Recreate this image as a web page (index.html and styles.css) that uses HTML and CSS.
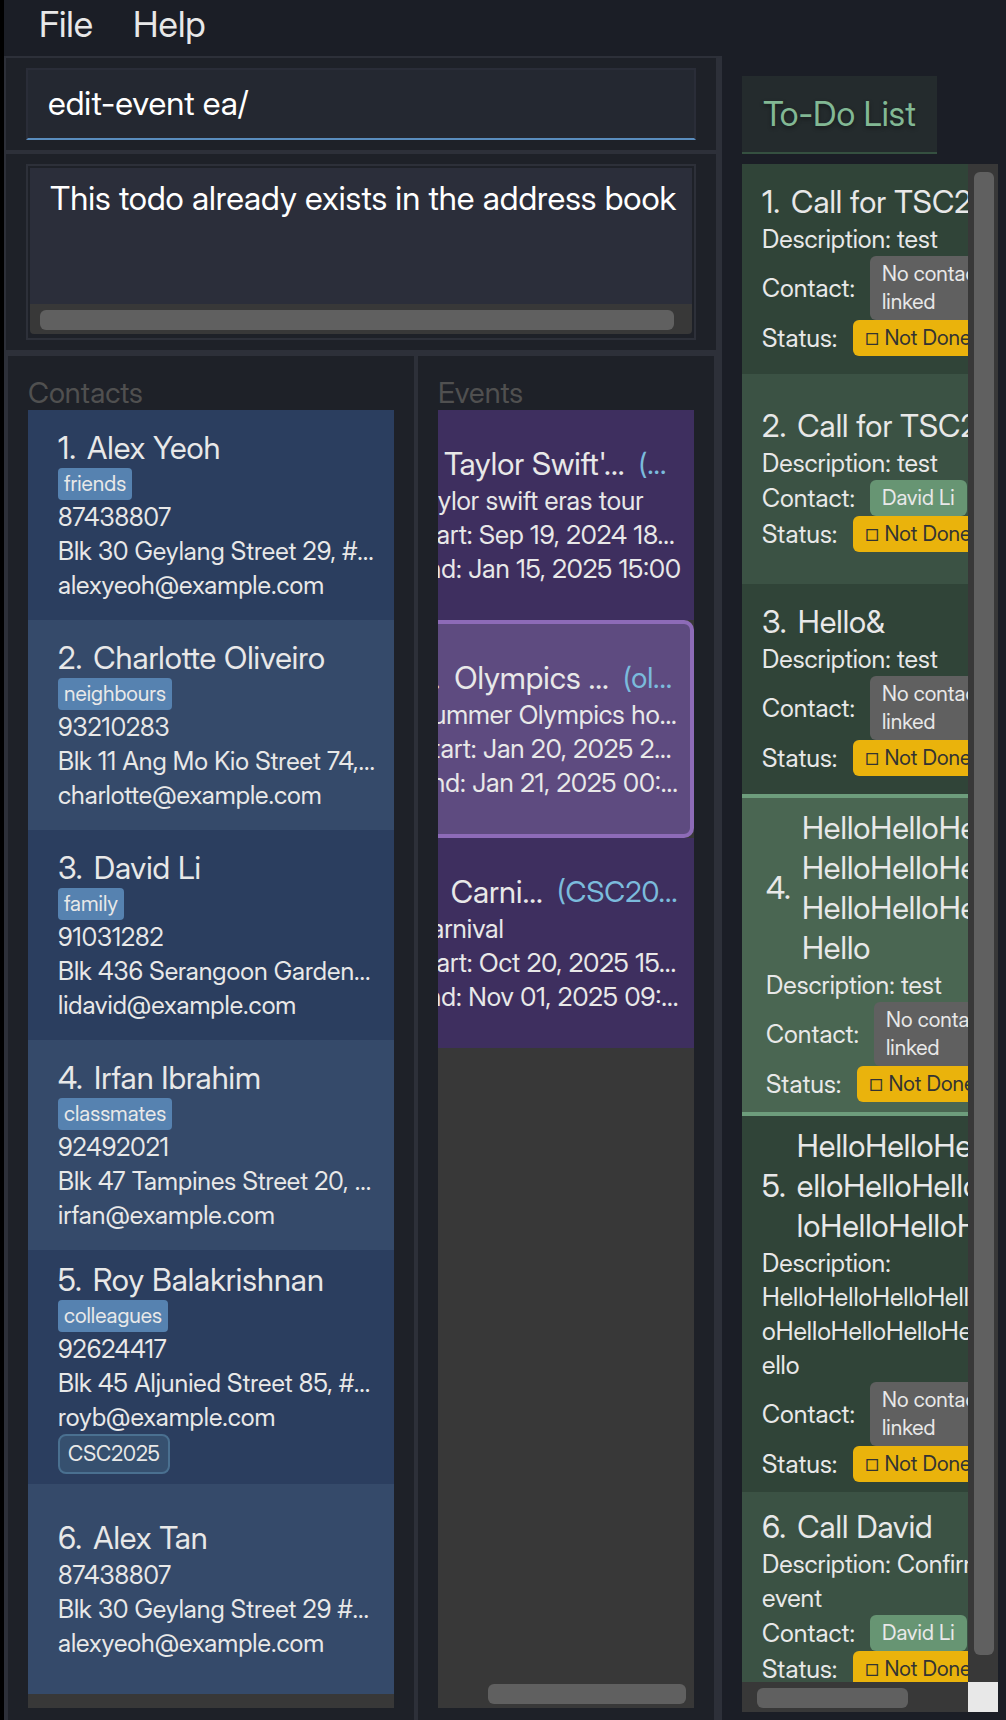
FILE: index.html
```html
<!DOCTYPE html>
<html lang="en">
<head>
<meta charset="utf-8">
<meta name="viewport" content="width=device-width, initial-scale=1">
<title>Address Book</title>
<link rel="stylesheet" href="styles.css">
</head>
<body>
<div class="app">
  <nav class="menu-bar" aria-label="Main menu">
    <button type="button" class="menu">File</button>
    <button type="button" class="menu">Help</button>
  </nav>
  <div class="workspace">
    <main class="main-pane">
      <form class="command">
        <input class="command-input" type="text" aria-label="Command" value="edit-event ea/">
      </form>
      <section class="result">
        <div class="result-frame">
          <textarea class="result-text" readonly wrap="off" aria-label="Result">This todo already exists in the address book</textarea>
          <div class="scroll-x scroll-result"><div class="thumb"></div></div>
        </div>
      </section>
      <div class="lists">
        <section class="column contacts">
          <h2 class="column-title">Contacts</h2>
          <div class="list-view">
            <ol class="list">
              <li class="card"><h3 class="name"><span>1.</span><span>Alex Yeoh</span></h3><span class="tag">friends</span><p>87438807</p><p>Blk 30 Geylang Street 29, #...</p><p>alexyeoh@example.com</p></li>
              <li class="card"><h3 class="name"><span>2.</span><span>Charlotte Oliveiro</span></h3><span class="tag">neighbours</span><p>93210283</p><p>Blk 11 Ang Mo Kio Street 74,...</p><p>charlotte@example.com</p></li>
              <li class="card"><h3 class="name"><span>3.</span><span>David Li</span></h3><span class="tag">family</span><p>91031282</p><p>Blk 436 Serangoon Garden...</p><p>lidavid@example.com</p></li>
              <li class="card"><h3 class="name"><span>4.</span><span>Irfan Ibrahim</span></h3><span class="tag">classmates</span><p>92492021</p><p>Blk 47 Tampines Street 20, ...</p><p>irfan@example.com</p></li>
              <li class="card"><h3 class="name"><span>5.</span><span>Roy Balakrishnan</span></h3><span class="tag">colleagues</span><p>92624417</p><p>Blk 45 Aljunied Street 85, #...</p><p>royb@example.com</p><span class="event-tag">CSC2025</span></li>
              <li class="card"><h3 class="name"><span>6.</span><span>Alex Tan</span></h3><p>87438807</p><p>Blk 30 Geylang Street 29 #...</p><p>alexyeoh@example.com</p></li>
            </ol>
          </div>
        </section>
        <section class="column events">
          <h2 class="column-title">Events</h2>
          <div class="list-view">
            <ol class="list">
              <li class="card"><h3 class="name"><span>1.</span><span>Taylor Swift'...</span><span class="alias">(...</span></h3><p>Taylor swift eras tour</p><p>Start: Sep 19, 2024 18...</p><p>End: Jan 15, 2025 15:00</p></li>
              <li class="card selected"><h3 class="name"><span>2.</span><span>Olympics ...</span><span class="alias">(ol...</span></h3><p>Summer Olympics ho...</p><p>Start: Jan 20, 2025 2...</p><p>End: Jan 21, 2025 00:...</p></li>
              <li class="card"><h3 class="name"><span>3.</span><span>Carni...</span><span class="alias">(CSC20...</span></h3><p>Carnival</p><p>Start: Oct 20, 2025 15...</p><p>End: Nov 01, 2025 09:...</p></li>
            </ol>
            <div class="scroll-x scroll-events"><div class="thumb"></div></div>
          </div>
        </section>
      </div>
    </main>
    <aside class="todo-pane">
      <h2 class="todo-title">To-Do List</h2>
      <div class="todo-view">
        <ol class="list todos">
          <li class="card"><h3 class="name"><span>1.</span><span>Call for TSC2025</span></h3><p>Description: test</p>
            <div class="row"><span class="label contact">Contact:</span><span class="badge none">No contact linked</span></div>
            <div class="row"><span class="label status">Status:</span><span class="badge pending"><span class="box">□</span> Not Done</span></div></li>
          <li class="card"><h3 class="name"><span>2.</span><span>Call for TSC2025</span></h3><p>Description: test</p>
            <div class="row"><span class="label contact">Contact:</span><span class="badge linked">David Li</span></div>
            <div class="row"><span class="label status">Status:</span><span class="badge pending"><span class="box">□</span> Not Done</span></div></li>
          <li class="card"><h3 class="name"><span>3.</span><span>Hello&amp;</span></h3><p>Description: test</p>
            <div class="row"><span class="label contact">Contact:</span><span class="badge none">No contact linked</span></div>
            <div class="row"><span class="label status">Status:</span><span class="badge pending"><span class="box">□</span> Not Done</span></div></li>
          <li class="card selected"><h3 class="name"><span>4.</span><span>HelloHelloHello<br>HelloHelloHello<br>HelloHelloHello<br>Hello</span></h3><p>Description: test</p>
            <div class="row"><span class="label contact">Contact:</span><span class="badge none">No contact linked</span></div>
            <div class="row"><span class="label status">Status:</span><span class="badge pending"><span class="box">□</span> Not Done</span></div></li>
          <li class="card"><h3 class="name"><span>5.</span><span>HelloHelloHelloH<br>elloHelloHelloHel<br>loHelloHelloHello</span></h3><p>Description:<br>HelloHelloHelloHell<br>oHelloHelloHelloHello<br>ello</p>
            <div class="row"><span class="label contact">Contact:</span><span class="badge none">No contact linked</span></div>
            <div class="row"><span class="label status">Status:</span><span class="badge pending"><span class="box">□</span> Not Done</span></div></li>
          <li class="card"><h3 class="name"><span>6.</span><span>Call David</span></h3><p>Description: Confirm<br>event</p>
            <div class="row"><span class="label contact">Contact:</span><span class="badge linked">David Li</span></div>
            <div class="row"><span class="label status">Status:</span><span class="badge pending"><span class="box">□</span> Not Done</span></div></li>
        </ol>
        <div class="scroll-y"><div class="thumb"></div></div>
        <div class="scroll-x scroll-todos"><div class="thumb"></div></div>
        <div class="corner"></div>
      </div>
    </aside>
  </div>
</div>
</body>
</html>
```
FILE: styles.css
```css
* { box-sizing: border-box; }

body {
  margin: 0;
  background: #1b1e26;
  color: #e8e8e8;
  font: 25px/34px "Inter Display", Inter, "Liberation Sans", sans-serif;
}

h2, h3, p, ol { margin: 0; padding: 0; font-weight: 400; }
ol { list-style: none; }

.app {
  display: flex;
  flex-direction: column;
  height: 100vh;
  border-left: 4px solid #000;
}

.menu-bar { display: flex; flex: none; height: 56px; padding-left: 15px; }
.menu {
  padding: 0 20px 8px;
  border: 0;
  background: none;
  color: #e8e8e8;
  font: inherit;
  font-size: 36px;
  line-height: 40px;
}

.workspace {
  display: grid;
  grid-template-columns: minmax(0, 1fr) 284px;
  flex: 1;
  min-height: 0;
}

/* Left side: command, result, lists */
.main-pane {
  display: flex;
  flex-direction: column;
  min-height: 0;
  border-right: 4px solid #2d3039;
  background: #1e2128;
}
.command, .result { flex: none; padding: 10px 20px; border: 2px solid #2d3039; }
.result { border-bottom: 0; }
.command-input {
  display: block;
  width: 100%;
  height: 72px;
  padding: 0 20px 2px;
  border: 2px solid #2a2d38;
  border-bottom-color: #5a8dbe;
  outline: 0;
  background: #242831;
  color: #fff;
  font: inherit;
  font-size: 33px;
}
.result-frame { padding: 2px 2px 4px; border: 2px solid #2d3039; }
.result-text {
  display: block;
  width: 100%;
  height: 136px;
  padding: 10px 20px;
  border: 0;
  outline: 0;
  overflow: hidden;
  resize: none;
  background: #2b2e3a;
  color: #fff;
  font: inherit;
  font-size: 33px;
  line-height: 40px;
}

.thumb { border-radius: 6px; background: #606060; }
.scroll-x { height: 30px; padding: 6px 0 4px; background: #383838; }
.scroll-x .thumb { height: 20px; }
.scroll-result { padding-left: 10px; padding-right: 18px; border-radius: 0 0 4px 4px; }

.lists {
  display: grid;
  grid-template-columns: 41fr 30fr;
  flex: 1;
  min-height: 0;
  border-top: 6px solid #2d3039;
  border-left: 4px solid #2d3039;
}
.column {
  display: flex;
  flex-direction: column;
  min-width: 0;
  min-height: 0;
  padding: 20px 20px 12px;
  border-right: 4px solid #2d3039;
}
.column-title { flex: none; color: #505050; font-size: 29px; line-height: 34px; }
.list-view { display: flex; flex-direction: column; flex: 1; min-height: 0; overflow: hidden; background: #383838; }

.list { flex: 1; min-height: 0; overflow: hidden; }
.card {
  display: flex;
  flex-direction: column;
  justify-content: center;
  align-items: flex-start;
  min-height: 210px;
  padding: 10px 20px;
  white-space: nowrap;
}
.name { display: flex; align-items: center; gap: 11px; font-size: 31px; line-height: 40px; }

.contacts .card { padding-left: 30px; background: #2b3e5f; }
.contacts .card:nth-child(even) { background: #354a6a; }
.tag {
  padding: 0 6px;
  border-radius: 4px;
  background: #5682b0;
  font-size: 21px;
  line-height: 32px;
}
.event-tag {
  padding: 0 8px;
  border: 2px solid #4a7090;
  border-radius: 8px;
  background: #36506f;
  font-size: 21px;
  line-height: 36px;
}

/* The events list is scrolled sideways to its end */
.events .list { margin-left: -46px; font-size: 26px; }
.events .name { gap: 14px; }
.events .card { background: #3e2f5f; }
.events .card.selected {
  min-height: 218px;
  border: 4px solid #8d6bb8;
  border-radius: 10px;
  background: #5e4b80;
}
.alias { color: #7bbbdc; font-size: 29px; }
.scroll-events { flex: none; padding-left: 50px; padding-right: 8px; }

/* Right side: to-do list */
.todo-pane { display: flex; flex-direction: column; min-height: 0; padding: 20px 8px 8px 20px; }
.todo-title {
  flex: none;
  align-self: flex-start;
  height: 78px;
  margin-bottom: 10px;
  padding: 0 21px;
  border-bottom: 2px solid #355040;
  background: #242b2d;
  color: #82b894;
  font-size: 34px;
  line-height: 76px;
  text-shadow: 0 2px 4px rgba(0, 0, 0, .4);
}
.todo-view {
  display: grid;
  grid-template: minmax(0, 1fr) 30px / minmax(0, 1fr) 30px;
  flex: 1;
  min-height: 0;
}
.todos .card { background: #304438; }
.todos .card:nth-child(even) { background: #3b5244; }
.todos .card.selected {
  border: solid #6d9d7c;
  border-width: 4px 0;
  padding-left: 24px;
  background: #4a6652;
}
.row { display: flex; align-items: center; }
.label { flex: none; }
.label.contact { width: 108px; }
.label.status { width: 91px; }
.badge {
  flex: none;
  padding: 4px 12px;
  border-radius: 6px;
  font-size: 21px;
  line-height: 28px;
}
.badge.none { width: 140px; background: #606060; white-space: normal; }
.badge.linked { background: #679573; }
.badge.pending { background: #eab30c; color: #333; }
.box { font-size: 16px; line-height: 1; }
.scroll-y { padding: 8px 4px 27px 6px; background: #383838; }
.scroll-y .thumb { height: 100%; }
.scroll-todos { padding-left: 15px; padding-right: 60px; }
.corner { background: #e8e8e8; }
```
